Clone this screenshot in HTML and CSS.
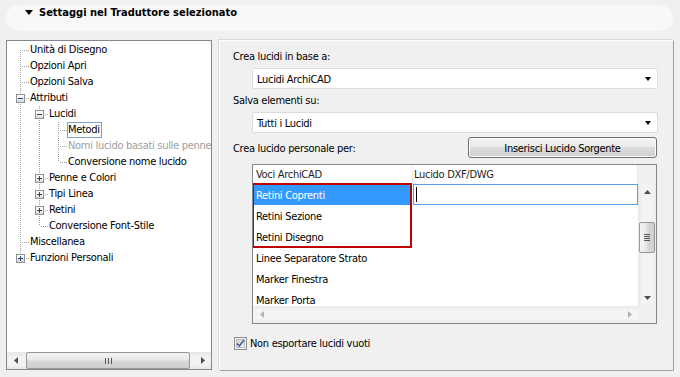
FILE: index.html
```html
<!DOCTYPE html>
<html lang="it">
<head>
<meta charset="utf-8">
<title>Settaggi nel Traduttore selezionato</title>
<link rel="stylesheet" href="styles.css">
</head>
<body>
<div class="hdr">
  <span class="tri"></span>
  <span class="hdr-title">Settaggi nel Traduttore selezionato</span>
</div>
<div class="main">
  <div class="tree">
    <div class="tree-body">
      <div class="row"><span class="c f"></span><span class="lbl">Unità di Disegno</span></div>
      <div class="row"><span class="c t"></span><span class="lbl">Opzioni Apri</span></div>
      <div class="row"><span class="c t"></span><span class="lbl">Opzioni Salva</span></div>
      <div class="row"><span class="c t"><span class="exp"></span></span><span class="lbl">Attributi</span></div>
      <div class="row"><span class="c v"></span><span class="c t"><span class="exp"></span></span><span class="lbl">Lucidi</span></div>
      <div class="row"><span class="c v"></span><span class="c v"></span><span class="c t"></span><span class="lbl cur">Metodi</span></div>
      <div class="row"><span class="c v"></span><span class="c v"></span><span class="c t"></span><span class="lbl dis">Nomi lucido basati sulle penne</span></div>
      <div class="row"><span class="c v"></span><span class="c v"></span><span class="c l"></span><span class="lbl">Conversione nome lucido</span></div>
      <div class="row"><span class="c v"></span><span class="c t"><span class="exp plus"></span></span><span class="lbl">Penne e Colori</span></div>
      <div class="row"><span class="c v"></span><span class="c t"><span class="exp plus"></span></span><span class="lbl">Tipi Linea</span></div>
      <div class="row"><span class="c v"></span><span class="c t"><span class="exp plus"></span></span><span class="lbl">Retini</span></div>
      <div class="row"><span class="c v"></span><span class="c l"></span><span class="lbl">Conversione Font-Stile</span></div>
      <div class="row"><span class="c t"></span><span class="lbl">Miscellanea</span></div>
      <div class="row"><span class="c l"><span class="exp plus"></span></span><span class="lbl">Funzioni Personali</span></div>
    </div>
    <div class="hscroll">
      <span class="sbtn"><svg width="4" height="7" viewBox="0 0 4 7"><path d="M4 0V7L0 3.5Z" fill="#4d4d4d"/></svg></span>
      <span class="htrack"><span class="hthumb"><span class="grip-v"></span></span></span>
      <span class="sbtn"><svg width="4" height="7" viewBox="0 0 4 7"><path d="M0 0V7L4 3.5Z" fill="#4d4d4d"/></svg></span>
    </div>
  </div>

  <div class="panel">
    <div class="plabel">Crea lucidi in base a:</div>
    <div class="sel"><span>Lucidi ArchiCAD</span><span class="dd"></span></div>
    <div class="plabel">Salva elementi su:</div>
    <div class="sel"><span>Tutti i Lucidi</span><span class="dd"></span></div>
    <div class="row3">
      <span class="plabel3">Crea lucido personale per:</span>
      <span class="btn">Inserisci Lucido Sorgente</span>
    </div>
    <div class="grid">
      <div class="ghead"><span class="gc1">Voci ArchiCAD</span><span class="gc2">Lucido DXF/DWG</span></div>
      <div class="gcorner"></div>
      <div class="gbody">
        <div class="grow"><span class="gc1 selrow">Retini Coprenti</span><span class="gc2"><span class="edit"><span class="caret"></span></span></span></div>
        <div class="grow"><span class="gc1">Retini Sezione</span></div>
        <div class="grow"><span class="gc1">Retini Disegno</span></div>
        <div class="grow"><span class="gc1">Linee Separatore Strato</span></div>
        <div class="grow"><span class="gc1">Marker Finestra</span></div>
        <div class="grow"><span class="gc1">Marker Porta</span></div>
        <div class="annot"></div>
      </div>
      <div class="vscroll">
        <span class="vbtn"><svg width="7" height="4" viewBox="0 0 7 4"><path d="M0 4H7L3.5 0Z" fill="#4d4d4d"/></svg></span>
        <span class="vtrack"><span class="vthumb"><span class="grip-h"></span></span></span>
        <span class="vbtn"><svg width="7" height="4" viewBox="0 0 7 4"><path d="M0 0H7L3.5 4Z" fill="#4d4d4d"/></svg></span>
      </div>
      <div class="hscroll2">
        <span class="sbtn"><svg width="4" height="7" viewBox="0 0 4 7"><path d="M4 0V7L0 3.5Z" fill="#b3b3b3"/></svg></span>
        <span class="sbtn"><svg width="4" height="7" viewBox="0 0 4 7"><path d="M0 0V7L4 3.5Z" fill="#b3b3b3"/></svg></span>
      </div>
      <div class="gcorner"></div>
    </div>
    <div class="chk">
      <svg class="box" width="13" height="13" viewBox="0 0 13 13">
        <defs><linearGradient id="cg" x1="0" y1="0" x2="1" y2="1"><stop offset="0" stop-color="#cbcfd5"/><stop offset="1" stop-color="#f6f6f6"/></linearGradient></defs>
        <rect x="0.5" y="0.5" width="12" height="12" fill="#f4f4f4" stroke="#8e8f8f"/>
        <rect x="2.5" y="2.5" width="8" height="8" fill="url(#cg)" stroke="#b8bcc3"/>
        <path d="M3 6.5L5.3 9L10 3" fill="none" stroke="#4a5f97" stroke-width="1.6"/>
      </svg>
      <span>Non esportare lucidi vuoti</span>
    </div>
  </div>
</div>
</body>
</html>
```

FILE: styles.css
```css
* { box-sizing: border-box; }
html, body { margin: 0; }
body {
  width: 680px;
  height: 377px;
  overflow: hidden;
  background: #f0f0f0;
  font-family: "DejaVu Sans Condensed", "DejaVu Sans", sans-serif;
  font-size: 11px;
  letter-spacing: -0.3px;
  color: #000;
  --dv: repeating-linear-gradient(to bottom, #a0a0a0 0 1px, transparent 1px 2px);
  --dh: repeating-linear-gradient(to right, #a0a0a0 0 1px, transparent 1px 2px);
}

/* header */
.hdr {
  margin: 5px 7px 0 6px;
  height: 26px;
  border-radius: 13px;
  background: #f8f8f8;
  display: flex;
  align-items: flex-start;
  padding-left: 19px;
}
.tri {
  margin-top: 5px;
  width: 0; height: 0;
  border-left: 4.5px solid transparent;
  border-right: 4.5px solid transparent;
  border-top: 5px solid #000;
}
.hdr-title {
  margin-left: 6px;
  font-weight: bold;
  letter-spacing: 0;
  line-height: 16px;
}

.main {
  display: flex;
  gap: 7px;
  margin-top: 9px;
  padding-left: 6px;
}

/* tree */
.tree {
  width: 206px;
  height: 330px;
  border: 1px solid #828790;
  background: #fff;
  display: flex;
  flex-direction: column;
}
.tree-body {
  flex: 1;
  padding: 1px 0 0 3px;
  overflow: hidden;
}
.row {
  display: flex;
  height: 16px;
  white-space: nowrap;
}
.c {
  flex: none;
  width: 19px;
  height: 16px;
  display: flex;
  background-repeat: no-repeat;
}
.c.v { background-image: var(--dv); background-position: 10px 0; background-size: 1px 16px; }
.c.t { background-image: var(--dv), var(--dh); background-position: 10px 0, 12px 8px; background-size: 1px 16px, 7px 1px; }
.c.l { background-image: var(--dv), var(--dh); background-position: 10px 0, 12px 8px; background-size: 1px 8px, 7px 1px; }
.c.f { background-image: var(--dv), var(--dh); background-position: 10px 8px, 12px 8px; background-size: 1px 8px, 7px 1px; }
.exp {
  width: 9px;
  height: 9px;
  margin: 4px 0 0 6px;
  border: 1px solid #919191;
  background:
    linear-gradient(#2b4470, #2b4470) center / 5px 1px no-repeat,
    linear-gradient(#ffffff, #d9d9d9);
}
.exp.plus {
  background:
    linear-gradient(#2b4470, #2b4470) center / 5px 1px no-repeat,
    linear-gradient(#2b4470, #2b4470) center / 1px 5px no-repeat,
    linear-gradient(#ffffff, #d9d9d9);
}
.lbl {
  border: 1px solid transparent;
  padding: 0 1px 0 0;
  line-height: 14px;
}
.lbl.cur { border-color: #7da2ce; }
.lbl.dis { color: #a0a0a0; }

.hscroll {
  height: 17px;
  display: flex;
  background: linear-gradient(#e6e6e6, #f2f2f2 30%, #f2f2f2 70%, #e8e8e8);
}
.sbtn {
  width: 17px;
  flex: none;
  display: flex;
  align-items: center;
  justify-content: center;
}
.htrack {
  flex: 1;
  display: flex;
  padding: 0 4px 0 2px;
}
.hthumb {
  flex: 1;
  border: 1px solid #979797;
  border-radius: 2px;
  background: linear-gradient(#f3f3f3, #e8e8e8 45%, #d6d6d6 55%, #cfcfcf);
  display: flex;
  align-items: center;
  justify-content: center;
}
.grip-v {
  width: 7px;
  height: 6px;
  background: repeating-linear-gradient(to right, #555 0 1px, transparent 1px 3px);
}

/* right panel */
.panel {
  width: 455px;
  height: 331px;
  border: 1px solid;
  border-color: #ffffff #a0a0a0 #a0a0a0 #ffffff;
  box-shadow: -1px -1px 0 #dadada;
  padding: 8px 15px 0 12px;
  display: flex;
  flex-direction: column;
}
.plabel {
  line-height: 16px;
  padding-left: 1px;
}
.sel {
  margin: 3px 0 4px 20px;
  height: 21px;
  background: #fff;
  border: 1px solid #dcdcdc;
  border-radius: 2px;
  display: flex;
  align-items: center;
  justify-content: space-between;
  padding: 1px 6px 0 4px;
}
.dd {
  width: 0; height: 0;
  border-left: 3.5px solid transparent;
  border-right: 3.5px solid transparent;
  border-top: 4px solid #000;
}
.row3 {
  display: flex;
  justify-content: space-between;
  align-items: center;
  margin-right: 1px;
  height: 21px;
}
.plabel3 { padding: 2px 0 0 1px; }
.btn {
  width: 189px;
  height: 21px;
  border: 1px solid #707070;
  border-radius: 3px;
  background: linear-gradient(#f2f2f2, #ebebeb 50%, #dddddd 50%, #cfcfcf);
  box-shadow: inset 0 0 0 1px #fcfcfc;
  display: flex;
  align-items: center;
  justify-content: center;
  padding-top: 1px;
}

.grid {
  margin: 6px 1px 0 20px;
  height: 160px;
  border: 1px solid #828790;
  background: #fff;
  display: grid;
  grid-template-columns: 1fr 18px;
  grid-template-rows: 18px 1fr 17px;
}
.ghead {
  display: flex;
  background: #fff;
  border-right: 1px solid #e5e5e5;
  line-height: 17px;
  padding-top: 1px;
}
.ghead .gc1 { width: 160px; padding-left: 3px; border-right: 1px solid #e5e5e5; color: #1e1e1e; }
.ghead .gc2 { padding-left: 1px; color: #1e1e1e; }
.gcorner { background: #f0f0f0; }
.gbody {
  position: relative;
  overflow: hidden;
  padding-top: 1px;
}
.grow {
  display: flex;
  height: 21px;
  white-space: nowrap;
}
.grow .gc1 {
  width: 157px;
  margin: 0 2px 0 1px;
  padding: 2px 0 0 2px;
  line-height: 19px;
}
.grow .gc1.selrow { background: #3399ff; color: #fff; }
.grow .gc2 { flex: 1; display: flex; }
.edit {
  flex: 1;
  border: 1px solid #569de5;
  background: #fff;
  padding: 2px 0 0 2px;
}
.caret { display: block; width: 1px; height: 15px; background: #000; }
.annot {
  position: absolute;
  left: -1px;
  top: 0;
  width: 160px;
  height: 65px;
  border: 2px solid #c00000;
}
.vscroll {
  display: flex;
  flex-direction: column;
  background: linear-gradient(to right, #e8e8e8, #f3f3f3 25%, #f3f3f3 75%, #ececec);
}
.vbtn {
  height: 17px;
  flex: none;
  display: flex;
  align-items: center;
  justify-content: center;
}
.vtrack {
  flex: 1;
  padding: 22px 1px 0 1px;
}
.vthumb {
  height: 31px;
  border: 1px solid #979797;
  border-radius: 2px;
  background: linear-gradient(to right, #f3f3f3, #e8e8e8 45%, #d6d6d6 55%, #cfcfcf);
  display: flex;
  align-items: center;
  justify-content: center;
}
.grip-h {
  width: 6px;
  height: 7px;
  background: repeating-linear-gradient(to bottom, #555 0 1px, transparent 1px 2px);
}
.hscroll2 {
  display: flex;
  justify-content: space-between;
  background: linear-gradient(#eaeaea, #f5f5f5 30%, #f5f5f5 70%, #ededed);
}

.chk {
  margin: 13px 0 0 2px;
  display: flex;
  align-items: center;
  gap: 3px;
  height: 13px;
}
.chk .box { flex: none; }
```
